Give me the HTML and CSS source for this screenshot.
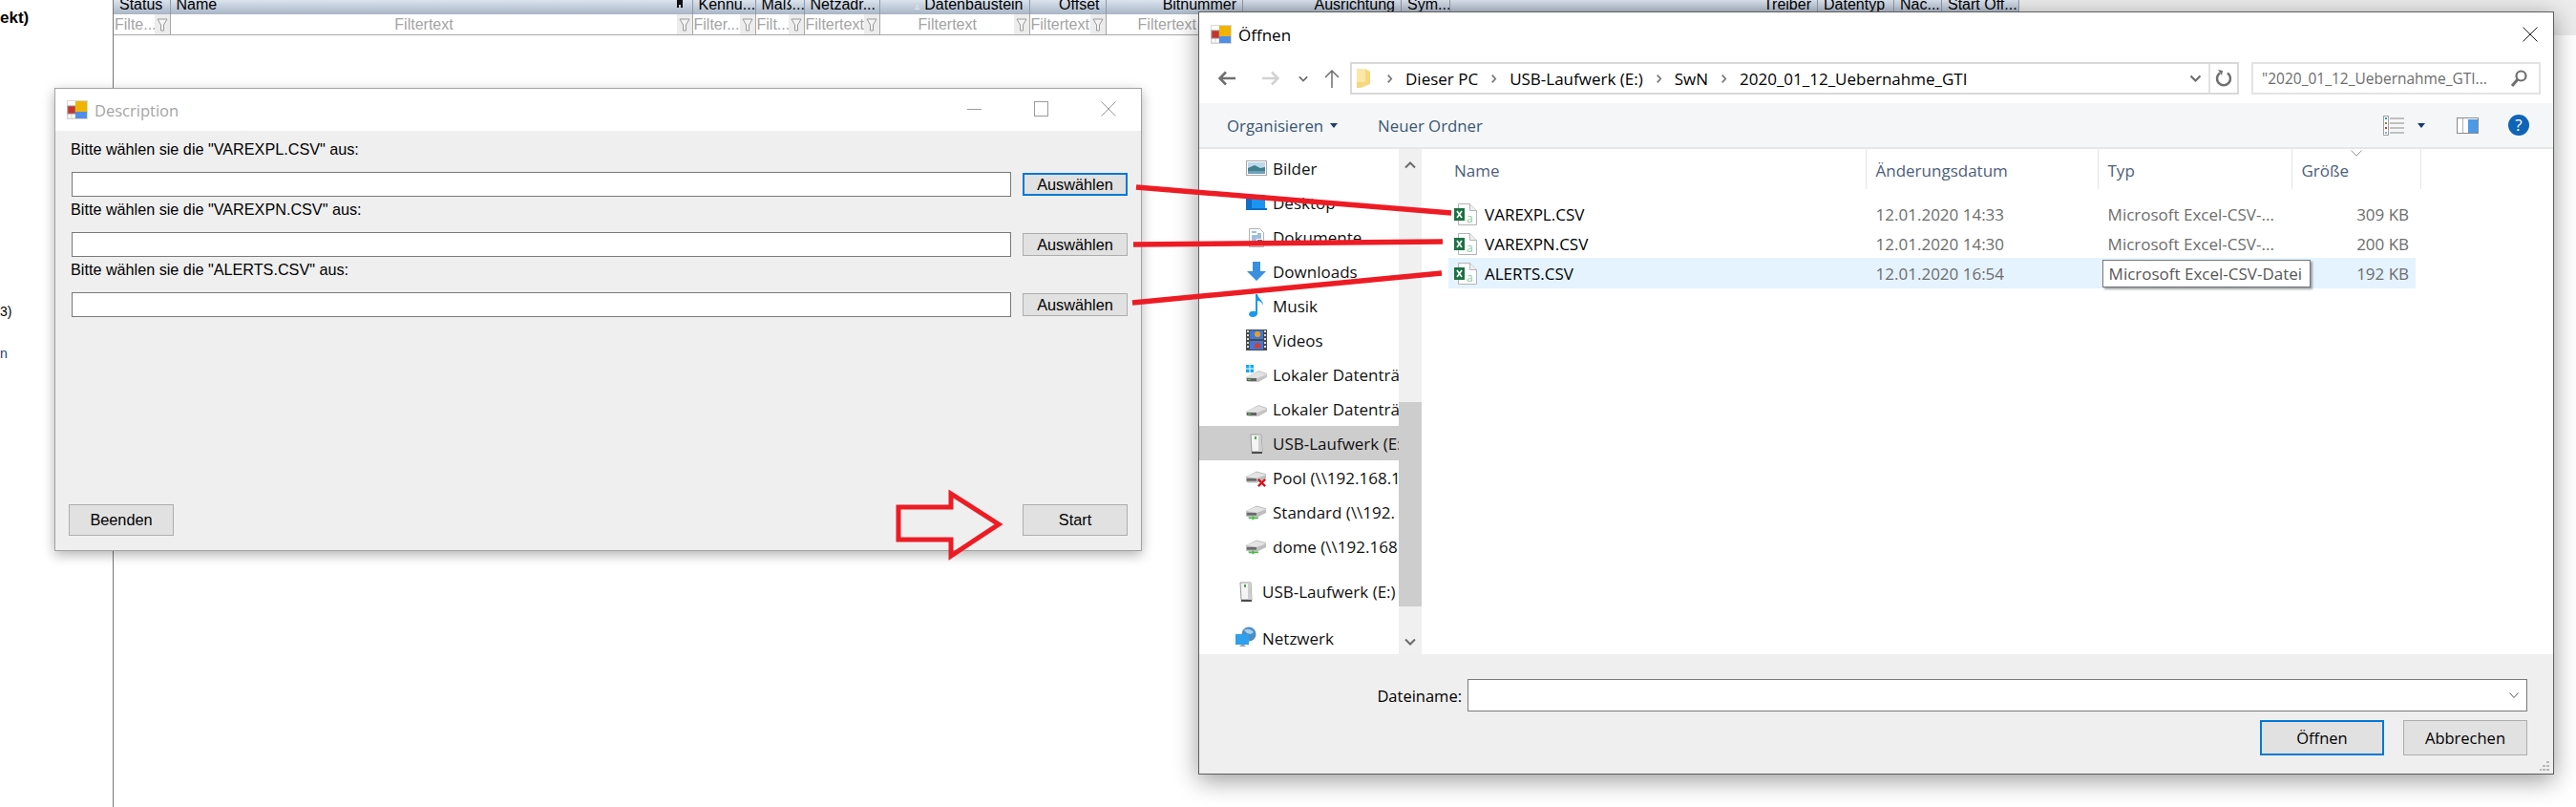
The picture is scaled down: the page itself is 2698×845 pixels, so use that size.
FILE: index.html

```html
<!DOCTYPE html>
<html lang="de">
<head>
  <meta charset="UTF-8">
  <title>Description</title>
  <link rel="stylesheet" href="styles.css">
</head>
<body>
  <svg class="defs" width="0" height="0">
    <defs>
      <symbol id="app" viewBox="0 0 22 20">
        <rect x="0.5" y="0.5" width="21" height="19" fill="#fff" stroke="#d8d8d8"/>
        <path d="M1 14v5h8v-5M5 14v5" fill="none" stroke="#d0d0d0"/>
        <rect x="1" y="6" width="8" height="8" fill="#c8322c" stroke="#9a8a88"/>
        <rect x="9" y="1" width="12" height="11" fill="#f0b400"/>
        <rect x="9" y="12" width="12" height="7" fill="#4f8fe8"/>
      </symbol>
      <symbol id="funnel" viewBox="0 0 12 14">
        <path d="M1 1h10L7.5 7v6h-3V7z" fill="#f4f4f4" stroke="#9a9a9a"/>
      </symbol>
      <symbol id="pic" viewBox="0 0 22 24">
        <rect x="0.5" y="4.5" width="21" height="15" fill="#fff" stroke="#a8a8a8"/>
        <rect x="2" y="6" width="18" height="7" fill="#bcd8ea"/>
        <path d="M2 12l7-3 6 3 5-1v7H2z" fill="#3f7f8e"/>
        <rect x="2" y="15" width="18" height="3" fill="#6f9fb8"/>
      </symbol>
      <symbol id="desk" viewBox="0 0 22 24">
        <path d="M2 4h18v14H2z" fill="#1b95f2"/>
        <path d="M0 4h6v16H0zM2 18h20v2H2z" fill="#0f6fc4"/>
      </symbol>
      <symbol id="doc" viewBox="0 0 22 24">
        <path d="M3.5 3.5h11l4 4v15h-15z" fill="#fff" stroke="#b0b0b0"/>
        <path d="M6 7h5M12 9h4M6 11h10M6 13h10M6 15h5M6 17h5M6 19h10" stroke="#3e7fc2"/>
        <rect x="12" y="15" width="5" height="4" fill="#54707c"/>
      </symbol>
      <symbol id="dl" viewBox="0 0 22 24">
        <path d="M7 2h8v10h6l-10 10L1 12h6z" fill="#3b8fe0"/>
      </symbol>
      <symbol id="note" viewBox="0 0 22 24">
        <path d="M10 0h2c1 5 6 6 6 12-1-3-3-5-6-5v13c0 3-3 4-5 4s-4-1-4-3c0-3 4-4 7-3z" fill="#1a9ae8"/>
      </symbol>
      <symbol id="film" viewBox="0 0 22 24">
        <rect x="0" y="1" width="22" height="22" fill="#4a4a4a"/>
        <path d="M1 3h2M1 7h2M1 11h2M1 15h2M1 19h2M19 3h2M19 7h2M19 11h2M19 15h2M19 19h2" stroke="#ddd" stroke-width="2"/>
        <rect x="4" y="2" width="14" height="9" fill="#3f78d8"/>
        <rect x="4" y="13" width="14" height="9" fill="#3f78d8"/>
        <circle cx="12" cy="6" r="3" fill="#e8a020"/>
        <circle cx="12" cy="18" r="3" fill="#d83c2c"/>
      </symbol>
      <symbol id="drive" viewBox="0 0 22 24">
        <path d="M0 15l13-7 9 3v4l-9 5H4l-4-1z" fill="#c4c4c4"/>
        <path d="M0 15l13-6 9 3-10 4z" fill="#e2e2e2"/>
        <path d="M1 16h10v3H1z" fill="#646464"/>
        <rect x="2" y="17" width="3" height="1" fill="#5ac85a"/>
      </symbol>
      <symbol id="win" viewBox="0 0 22 24">
        <use href="#drive" width="22" height="24"/>
        <path d="M0 2h3.5v3.5H0zM4.500 2H8v3.500H4.500zM0 6.500h3.500V10H0zM4.500 6.500H8V10H4.500z" fill="#14a8f0"/>
      </symbol>
      <symbol id="usb" viewBox="0 0 22 24">
        <path d="M5 3h11l1 18H6z" fill="#f4f4f4" stroke="#9a9a9a"/>
        <path d="M13 3h3l1 18h-4z" fill="#cfcfcf"/>
        <path d="M6 21h11v2H6z" fill="#4c4c4c"/>
        <rect x="9" y="5" width="2" height="3" fill="#4ca84c"/>
      </symbol>
      <symbol id="netdrive" viewBox="0 0 24 24">
        <path d="M0 11l12-6 11 3v5l-10 5H3l-3-1z" fill="#bdbdbd"/>
        <path d="M0 11l12-5 11 3-11 4z" fill="#e4e4e4"/>
        <path d="M1 13h11v3H1z" fill="#6a6a6a"/>
        <path d="M3 19h11M8 17v4" stroke="#50b84c" stroke-width="2"/>
      </symbol>
      <symbol id="lostdrive" viewBox="0 0 24 24">
        <path d="M0 11l12-6 11 3v5l-10 5H3l-3-1z" fill="#bdbdbd"/>
        <path d="M0 11l12-5 11 3-11 4z" fill="#e4e4e4"/>
        <path d="M1 13h11v3H1z" fill="#6a6a6a"/>
        <path d="M14 14l8 8M22 14l-8 8" stroke="#d8141c" stroke-width="2.500"/>
      </symbol>
      <symbol id="globe" viewBox="0 0 22 24">
        <circle cx="14" cy="8" r="7.500" fill="#4a8ec8"/>
        <path d="M9 4c3-2 7-2 10 2l-3 2-4-1z" fill="#a8d0ea"/>
        <rect x="0" y="8" width="14" height="11" fill="#2ea0ee"/>
        <path d="M4 21h7l-2-2H6z" fill="#a0a0a0"/>
      </symbol>
      <symbol id="csv" viewBox="0 0 24 23">
        <path d="M4.500 0.500h12l7 7v15h-19z" fill="#fff" stroke="#b4b4b4"/>
        <path d="M16.500 0.500v7h7" fill="#f0f0f0" stroke="#b4b4b4"/>
        <rect x="0" y="5" width="11" height="13" fill="#1e7145"/>
        <path d="M3 8l5 7M8 8l-5 7" stroke="#fff" stroke-width="1.600"/>
        <text x="13" y="20" class="csv-a">a</text>
      </symbol>
      <symbol id="chev" viewBox="0 0 8 12">
        <path d="M2 1.500l4 4.500-4 4.500" fill="none" stroke="#7a7a7a" stroke-width="2"/>
      </symbol>
      <symbol id="chevd" viewBox="0 0 12 8">
        <path d="M1 1.500l5 5 5-5" fill="none" stroke="#6a6a6a" stroke-width="2"/>
      </symbol>
    </defs>
  </svg>

  <div class="app">
    <aside class="side">
      <b class="side-title">ekt)</b>
      <span class="side-count">3)</span>
      <span class="side-link">n</span>
    </aside>
    <main class="work">
      <div class="grid-band">
        <div class="grid-table">
          <div class="grid-head">
            <div class="th">Status</div>
            <div class="th">Name<svg class="pin" viewBox="0 0 8 8"><path d="M1 0h6v8H5V5H3v3H1z" fill="#111"/></svg></div>
            <div class="th">Kennu...</div>
            <div class="th">Maß...</div>
            <div class="th">Netzadr...</div>
            <div class="th th-r"><span class="sort">▵</span>Datenbaustein</div>
            <div class="th th-r">Offset</div>
            <div class="th th-r">Bitnummer</div>
            <div class="th th-r">Ausrichtung</div>
            <div class="th">Sym...</div>
            <div class="th th-r">Treiber</div>
            <div class="th">Datentyp</div>
            <div class="th">Nac...</div>
            <div class="th">Start Off...</div>
          </div>
          <div class="grid-filter">
            <div class="fc"><span class="ft">Filte...</span><span class="fb"><svg><use href="#funnel"/></svg></span></div>
            <div class="fc"><span class="ft ft-c">Filtertext</span><span class="fb"><svg><use href="#funnel"/></svg></span></div>
            <div class="fc"><span class="ft">Filter...</span><span class="fb"><svg><use href="#funnel"/></svg></span></div>
            <div class="fc"><span class="ft">Filt...</span><span class="fb"><svg><use href="#funnel"/></svg></span></div>
            <div class="fc"><span class="ft">Filtertext</span><span class="fb"><svg><use href="#funnel"/></svg></span></div>
            <div class="fc"><span class="ft ft-c">Filtertext</span><span class="fb"><svg><use href="#funnel"/></svg></span></div>
            <div class="fc"><span class="ft">Filtertext</span><span class="fb"><svg><use href="#funnel"/></svg></span></div>
            <div class="fc"><span class="ft ft-c">Filtertext</span><span class="fb"><svg><use href="#funnel"/></svg></span></div>
          </div>
        </div>
      </div>
    </main>
  </div>

  <section class="win win-desc">
    <header class="desc-title">
      <svg class="app-ico"><use href="#app"/></svg>
      <span class="desc-name">Description</span>
      <div class="caption">
        <svg class="cap" viewBox="0 0 16 16"><path d="M0 8.500h15" stroke="#9a9a9a" fill="none"/></svg>
        <svg class="cap" viewBox="0 0 16 16"><rect x="0.500" y="0.500" width="14" height="15" stroke="#9a9a9a" fill="none"/></svg>
        <svg class="cap" viewBox="0 0 16 16"><path d="M0.500 0.500l15 15M15.500 0.500l-15 15" stroke="#9a9a9a" fill="none"/></svg>
      </div>
    </header>
    <div class="desc-body">
      <div class="pick">
        <label class="pick-label">Bitte wählen sie die "VAREXPL.CSV" aus:</label>
        <div class="pick-row"><input class="pick-input" type="text"><button class="btn btn-focus">Auswählen</button></div>
      </div>
      <div class="pick">
        <label class="pick-label">Bitte wählen sie die "VAREXPN.CSV" aus:</label>
        <div class="pick-row"><input class="pick-input" type="text"><button class="btn">Auswählen</button></div>
      </div>
      <div class="pick">
        <label class="pick-label">Bitte wählen sie die "ALERTS.CSV" aus:</label>
        <div class="pick-row"><input class="pick-input" type="text"><button class="btn">Auswählen</button></div>
      </div>
      <div class="desc-foot">
        <button class="btn btn-big">Beenden</button>
        <button class="btn btn-big">Start</button>
      </div>
    </div>
  </section>

  <section class="win win-open">
    <header class="open-title">
      <svg class="app-ico"><use href="#app"/></svg>
      <span class="open-name">Öffnen</span>
      <svg class="open-close" viewBox="0 0 16 16"><path d="M0.500 0.500l15 15M15.500 0.500l-15 15" stroke="#222" fill="none"/></svg>
    </header>

    <div class="open-nav">
      <svg class="nav-back" viewBox="0 0 20 16"><path d="M19 8H3M9 1.500L2.500 8 9 14.500" fill="none" stroke="#6f6f6f" stroke-width="2.500"/></svg>
      <svg class="nav-fwd" viewBox="0 0 20 16"><path d="M1 8h16M11 1.500L17.500 8 11 14.500" fill="none" stroke="#d2d2d2" stroke-width="2.500"/></svg>
      <svg class="nav-down"><use href="#chevd"/></svg>
      <svg class="nav-up" viewBox="0 0 18 20"><path d="M9 20V2M2 9l7-7 7 7" fill="none" stroke="#6f6f6f" stroke-width="1.500"/></svg>
      <div class="addr">
        <svg class="folder" viewBox="0 0 14 20"><path d="M0 0h9l5 3v13l-10 4H0z" fill="#f6d77e"/><path d="M0 0h9v14H0z" fill="#fbe7a6"/></svg>
        <svg class="crumb-sep"><use href="#chev"/></svg>
        <span>Dieser PC</span>
        <svg class="crumb-sep"><use href="#chev"/></svg>
        <span>USB-Laufwerk (E:)</span>
        <svg class="crumb-sep"><use href="#chev"/></svg>
        <span>SwN</span>
        <svg class="crumb-sep"><use href="#chev"/></svg>
        <span>2020_01_12_Uebernahme_GTI</span>
        <svg class="addr-down"><use href="#chevd"/></svg>
        <span class="addr-refresh">
          <svg viewBox="0 0 18 18"><path d="M5 3.500a7 7 0 1 0 8 0" fill="none" stroke="#6f6f6f" stroke-width="2.500"/><path d="M3 0l5 1-1 5z" fill="#6f6f6f"/></svg>
        </span>
      </div>
      <div class="search">
        <span class="search-text">"2020_01_12_Uebernahme_GTI...</span>
        <svg class="search-ico" viewBox="0 0 18 18"><circle cx="11.500" cy="6.500" r="5" fill="none" stroke="#6f6f6f" stroke-width="2.200"/><path d="M8 10l-6 7" stroke="#6f6f6f" stroke-width="3"/></svg>
      </div>
    </div>

    <div class="open-tools">
      <span class="tool">Organisieren</span>
      <span class="tool-tri"></span>
      <span class="tool tool-new">Neuer Ordner</span>
      <div class="tool-right">
        <svg class="view-ico" viewBox="0 0 22 21">
          <rect x="0.500" y="0.500" width="5" height="20" fill="#fff" stroke="#a0a0a0"/>
          <path d="M7 3h15M7 8h15M7 13h15M7 18h15" stroke="#8a8a8a"/>
          <rect x="2" y="2" width="2" height="2" fill="#3b8fc8"/><rect x="2" y="7" width="2" height="2" fill="#9a8a3c"/><rect x="2" y="12" width="2" height="2" fill="#c8322c"/><rect x="2" y="17" width="2" height="2" fill="#8ab0c8"/>
        </svg>
        <span class="view-tri"></span>
        <svg class="pane-ico" viewBox="0 0 23 17">
          <rect x="0.500" y="0.500" width="22" height="16" fill="#fff" stroke="#8a8a8a"/>
          <path d="M6.500 1v15" stroke="#b0b0b0"/>
          <rect x="12" y="2" width="10" height="14" fill="#4a9ae8"/>
        </svg>
        <span class="help">?</span>
      </div>
    </div>

    <div class="open-main">
      <nav class="tree">
        <div class="tree-row"><svg class="ico"><use href="#pic"/></svg><span>Bilder</span></div>
        <div class="tree-row"><svg class="ico"><use href="#desk"/></svg><span>Desktop</span></div>
        <div class="tree-row"><svg class="ico"><use href="#doc"/></svg><span>Dokumente</span></div>
        <div class="tree-row"><svg class="ico"><use href="#dl"/></svg><span>Downloads</span></div>
        <div class="tree-row"><svg class="ico"><use href="#note"/></svg><span>Musik</span></div>
        <div class="tree-row"><svg class="ico"><use href="#film"/></svg><span>Videos</span></div>
        <div class="tree-row"><svg class="ico"><use href="#win"/></svg><span>Lokaler Datenträger</span></div>
        <div class="tree-row"><svg class="ico"><use href="#drive"/></svg><span>Lokaler Datenträger</span></div>
        <div class="tree-row tree-sel"><svg class="ico"><use href="#usb"/></svg><span>USB-Laufwerk (E:)</span></div>
        <div class="tree-row"><svg class="ico"><use href="#lostdrive"/></svg><span>Pool (\\192.168.1</span></div>
        <div class="tree-row"><svg class="ico"><use href="#netdrive"/></svg><span>Standard (\\192.</span></div>
        <div class="tree-row"><svg class="ico"><use href="#netdrive"/></svg><span>dome (\\192.168</span></div>
        <div class="tree-row tree-top tree-usb"><svg class="ico"><use href="#usb"/></svg><span>USB-Laufwerk (E:)</span></div>
        <div class="tree-row tree-top tree-net"><svg class="ico"><use href="#globe"/></svg><span>Netzwerk</span></div>
      </nav>
      <div class="vscroll">
        <svg class="vs-up" viewBox="0 0 12 8"><path d="M1 6.500l5-5 5 5" fill="none" stroke="#6a6a6a" stroke-width="2"/></svg>
        <div class="vs-thumb"></div>
        <svg class="vs-down"><use href="#chevd"/></svg>
      </div>
      <div class="files">
        <div class="files-head">
          <div class="col col-name">Name</div>
          <div class="col">Änderungsdatum</div>
          <div class="col">Typ</div>
          <div class="col">Größe<svg class="col-caret" viewBox="0 0 12 7"><path d="M0.500 0.500L6 6l5.500-5.500" fill="none" stroke="#9a9a9a"/></svg></div>
        </div>
        <div class="file">
          <div class="f-name"><svg class="f-ico"><use href="#csv"/></svg>VAREXPL.CSV</div>
          <div class="f-meta">12.01.2020 14:33</div>
          <div class="f-meta">Microsoft Excel-CSV-...</div>
          <div class="f-meta f-size">309 KB</div>
        </div>
        <div class="file">
          <div class="f-name"><svg class="f-ico"><use href="#csv"/></svg>VAREXPN.CSV</div>
          <div class="f-meta">12.01.2020 14:30</div>
          <div class="f-meta">Microsoft Excel-CSV-...</div>
          <div class="f-meta f-size">200 KB</div>
        </div>
        <div class="file file-hover">
          <div class="f-name"><svg class="f-ico"><use href="#csv"/></svg>ALERTS.CSV</div>
          <div class="f-meta">12.01.2020 16:54</div>
          <div class="f-meta f-type"><span class="tip">Microsoft Excel-CSV-Datei</span></div>
          <div class="f-meta f-size">192 KB</div>
        </div>
      </div>
    </div>

    <footer class="open-foot">
      <div class="fname">
        <span class="fname-label">Dateiname:</span>
        <div class="fname-box"><svg class="fname-down" viewBox="0 0 10 6"><path d="M0.500 0.500L5 5.500l4.500-5" fill="none" stroke="#555"/></svg></div>
      </div>
      <div class="open-btns">
        <button class="btn btn-open btn-focus">Öffnen</button>
        <button class="btn btn-open">Abbrechen</button>
      </div>
      <svg class="grip" viewBox="0 0 10 10"><path d="M7 0h3v2H7zM7 4h3v2H7zM7 8h3v2H7zM3 4h3v2H3zM3 8h3v2H3zM0 8h2v2H0z" fill="#b8b8b8"/></svg>
    </footer>
  </section>

  <!-- rote Markierungen ueber beiden Fenstern -->
  <svg class="marks" viewBox="0 0 2698 845">
    <path d="M1190 196L1520 223M1187 256L1511 253M1186 317L1510 286" stroke="#ed1c24" stroke-width="5.500" fill="none"/>
    <polygon points="941,531 996,531 996,517 1046,549 996,582 996,565 941,565" stroke="#ed1c24" stroke-width="5" fill="none"/>
  </svg>
</body>
</html>
```

FILE: styles.css

```css
html, body {
  margin: 0;
  height: 845px;
  overflow: hidden;
  background: #fff;
}
body {
  position: relative;
  font-family: "Liberation Sans", Arial, sans-serif;
  font-size: 16px;
  color: #000;
}
svg {
  display: block;
  flex: none;
}
.defs {
  position: absolute;
}
.csv-a {
  font-family: "Open Sans", sans-serif;
  font-size: 12px;
  fill: #8cc8a4;
}

/* Hintergrund */
.app {
  display: flex;
  height: 845px;
}
.side {
  width: 118px;
  flex: none;
  border-right: 1px solid #777;
  display: flex;
  flex-direction: column;
  font-size: 14px;
  padding-top: 10px;
}
.side-title {
  font-size: 17px;
  line-height: 17px;
}
.side-count {
  margin-top: 291px;
  line-height: 17px;
}
.side-link {
  margin-top: 27px;
  line-height: 17px;
  color: #1a3c78;
}
.work {
  flex: 1;
  min-width: 0;
}
.grid-band {
  height: 37px;
  background: #ececec;
}
.grid-table {
  width: 1996px;
}
.grid-head, .grid-filter {
  display: grid;
  grid-template-columns: 59.5px 547px 66px 51px 79.5px 156.5px 80px 143.5px 166px 51px 385px 80px 50px 81px;
}
.grid-head {
  height: 15px;
  background: linear-gradient(#dbe3ee, #a9b5c6);
}
.th {
  position: relative;
  height: 15px;
  line-height: 10px;
  padding: 0 6px;
  box-sizing: border-box;
  border-right: 1px solid #8f9aa9;
  white-space: nowrap;
  overflow: hidden;
}
.th-r {
  text-align: right;
}
.pin {
  position: absolute;
  right: 9px;
  top: 0;
  width: 8px;
  height: 8px;
}
.sort {
  color: #eef2f7;
  font-size: 10px;
  margin-right: 5px;
}
.grid-filter {
  height: 22px;
  background: #fff;
  border-bottom: 1px solid #a8a8a8;
  box-sizing: border-box;
}
.fc {
  display: flex;
  border-right: 1px solid #a8a8a8;
  min-width: 0;
}
.ft {
  flex: 1;
  min-width: 0;
  line-height: 21px;
  color: #a4a4a4;
  white-space: nowrap;
  overflow: hidden;
  padding-left: 1px;
}
.ft-c {
  text-align: center;
}
.fb {
  width: 16px;
  flex: none;
  background: #ececec;
  display: flex;
  align-items: center;
  justify-content: center;
}
.fb svg {
  width: 12px;
  height: 14px;
}

/* Fenster */
.win {
  position: absolute;
  box-sizing: border-box;
  display: flex;
  flex-direction: column;
  background: #fff;
}
.app-ico {
  width: 22px;
  height: 20px;
}

/* Description */
.win-desc {
  left: 57px;
  top: 92px;
  width: 1139px;
  height: 485px;
  border: 1px solid #a2a2a2;
  box-shadow: 0 4px 12px rgba(0,0,0,0.3);
}
.desc-title {
  height: 44px;
  flex: none;
  display: flex;
  align-items: center;
  padding-left: 12px;
}
.desc-name {
  margin-left: 7px;
  font-family: "Open Sans", sans-serif;
  font-size: 16.500px;
  color: #a4a4a4;
}
.caption {
  margin-left: auto;
  display: flex;
  gap: 54px;
  padding-right: 26px;
  margin-top: -2px;
}
.cap {
  width: 16px;
  height: 16px;
}
.desc-body {
  flex: 1;
  background: #efefef;
  display: flex;
  flex-direction: column;
  padding: 9px 14px 15px 14px;
}
.pick {
  margin-bottom: 3px;
}
.pick-label {
  display: block;
  padding-left: 2px;
  line-height: 20px;
  margin-bottom: 14px;
  font-size: 16.200px;
  white-space: nowrap;
}
.pick-row {
  display: flex;
  align-items: center;
  gap: 12px;
  padding-left: 3px;
}
.pick-input {
  width: 984px;
  height: 26px;
  box-sizing: border-box;
  border: 1px solid #7a7a7a;
  background: #fff;
  padding: 0;
  margin: 0;
}
.btn {
  width: 110px;
  height: 24px;
  box-sizing: border-box;
  border: 1px solid #adadad;
  background: #e1e1e1;
  font-family: "Liberation Sans", Arial, sans-serif;
  font-size: 16.300px;
  color: #000;
  padding: 0;
  margin: 0;
}
.btn-focus {
  border: 2px solid #0078d7;
}
.btn-big {
  height: 33px;
}
.desc-foot {
  margin-top: auto;
  display: flex;
  justify-content: space-between;
}

/* Oeffnen-Dialog */
.win-open {
  left: 1255px;
  top: 12px;
  width: 1420px;
  height: 799px;
  border: 1px solid #5e5e5e;
  box-shadow: 0 6px 24px rgba(0,0,0,0.4);
  font-family: "Open Sans", sans-serif;
  font-size: 17px;
}
.open-title {
  height: 52px;
  flex: none;
  display: flex;
  align-items: center;
  padding: 0 16px 6px 12px;
  box-sizing: border-box;
}
.open-name {
  margin-left: 7px;
}
.open-close {
  margin-left: auto;
  width: 16px;
  height: 16px;
}
.open-nav {
  height: 34px;
  flex: none;
  margin-bottom: 9px;
  display: flex;
  align-items: center;
  padding-left: 19px;
}
.nav-back, .nav-fwd {
  width: 20px;
  height: 16px;
}
.nav-fwd {
  margin-left: 26px;
}
.nav-down {
  width: 10px;
  height: 7px;
  margin-left: 19px;
}
.nav-up {
  width: 18px;
  height: 20px;
  margin-left: 16px;
}
.addr {
  margin-left: 10px;
  width: 931px;
  height: 34px;
  box-sizing: border-box;
  border: 2px solid #d9d9d9;
  display: flex;
  align-items: center;
  gap: 13px;
  padding-left: 5px;
  white-space: nowrap;
}
.folder {
  width: 14px;
  height: 20px;
  margin-right: 4px;
}
.crumb-sep {
  width: 7px;
  height: 11px;
}
.addr-down {
  width: 13px;
  height: 8px;
  margin-left: auto;
}
.addr-refresh {
  align-self: stretch;
  width: 28px;
  margin-left: -6px;
  border-left: 2px solid #e3e3e3;
  display: flex;
  align-items: center;
  justify-content: center;
}
.addr-refresh svg {
  width: 18px;
  height: 18px;
}
.search {
  margin-left: 13px;
  width: 303px;
  height: 34px;
  box-sizing: border-box;
  border: 2px solid #e3e3e3;
  display: flex;
  align-items: center;
  padding: 0 12px 0 9px;
  color: #6d6d6d;
  font-size: 15.500px;
  white-space: nowrap;
}
.search-text {
  flex: 1;
  overflow: hidden;
}
.search-ico {
  width: 18px;
  height: 18px;
}
.open-tools {
  height: 48px;
  flex: none;
  box-sizing: border-box;
  background: #f5f6f7;
  border-bottom: 2px solid #e6e6e6;
  display: flex;
  align-items: center;
  padding: 0 25px 0 29px;
}
.tool {
  color: #3a5676;
  font-size: 16.800px;
}
.tool-tri, .view-tri {
  width: 0;
  height: 0;
  border: 4px solid transparent;
  border-top: 5px solid #1f3f66;
  border-bottom: 0;
}
.tool-tri {
  margin-left: 7px;
}
.tool-new {
  margin-left: 42px;
}
.tool-right {
  margin-left: auto;
  display: flex;
  align-items: center;
}
.view-ico {
  width: 22px;
  height: 21px;
}
.view-tri {
  margin-left: 14px;
  border-top-color: #123a6c;
}
.pane-ico {
  width: 23px;
  height: 17px;
  margin-left: 33px;
}
.help {
  width: 22px;
  height: 22px;
  margin-left: 31px;
  border-radius: 50%;
  background: #0f64b8;
  color: #fff;
  font-size: 17px;
  line-height: 22px;
  text-align: center;
}
.open-main {
  flex: 1;
  min-height: 0;
  display: flex;
}
.tree {
  width: 209px;
  flex: none;
  padding-top: 2px;
  box-sizing: border-box;
  overflow: hidden;
}
.tree-row {
  height: 36px;
  display: flex;
  align-items: center;
  gap: 6px;
  padding-left: 49px;
  white-space: nowrap;
  overflow: hidden;
}
.tree-row span {
  color: #111;
}
.tree-sel {
  background: #cdcdcd;
}
.tree-top {
  padding-left: 38px;
}
.tree-usb {
  margin-top: 11px;
}
.tree-net {
  margin-top: 13px;
}
.ico {
  width: 22px;
  height: 24px;
}
.vscroll {
  width: 24px;
  flex: none;
  background: #f0f0f0;
  display: flex;
  flex-direction: column;
  align-items: center;
}
.vs-up {
  width: 12px;
  height: 8px;
  margin-top: 13px;
}
.vs-thumb {
  align-self: stretch;
  height: 214px;
  margin-top: 244px;
  background: #cdcdcd;
}
.vs-down {
  width: 12px;
  height: 8px;
  margin-top: auto;
  margin-bottom: 9px;
}
.files {
  flex: 1;
  min-width: 0;
  border-left: 4px solid #fff;
}
.files-head {
  height: 42px;
  display: grid;
  grid-template-columns: 461.500px 243px 203px 135px;
}
.col {
  position: relative;
  box-sizing: border-box;
  padding: 3px 0 0 10px;
  display: flex;
  align-items: center;
  border-right: 1px solid #e5e5e5;
  color: #4c607a;
}
.col-name {
  padding-left: 30px;
}
.col-caret {
  position: absolute;
  left: 61px;
  top: 1px;
  width: 12px;
  height: 7px;
}
.file {
  margin: 0 0 0 24px;
  width: 1013px;
  height: 31px;
  display: grid;
  grid-template-columns: 447.600px 243px 202.500px 120px;
  align-items: center;
}
.files-head + .file {
  margin-top: 10.500px;
}
.file-hover {
  background: #e5f3ff;
  box-shadow: 0 -1px 0 #e5f3ff;
}
.f-name {
  display: flex;
  align-items: center;
  gap: 8px;
  padding-left: 6px;
}
.f-ico {
  width: 24px;
  height: 23px;
}
.f-meta {
  color: #6d6d6d;
  white-space: nowrap;
}
.f-size {
  text-align: right;
  padding-right: 7px;
}
.f-type {
  position: relative;
  height: 100%;
}
.tip {
  position: absolute;
  left: -6px;
  top: 1px;
  width: 218px;
  height: 29px;
  line-height: 27px;
  box-sizing: border-box;
  padding-left: 6px;
  border: 1px solid #767676;
  background: #fff;
  color: #575757;
  box-shadow: 2px 2px 2px rgba(0,0,0,0.35);
}
.open-foot {
  position: relative;
  height: 125px;
  flex: none;
  box-sizing: border-box;
  background: #efefef;
  padding: 26px 27px 0 0;
}
.fname {
  display: flex;
  justify-content: flex-end;
  align-items: center;
  gap: 6px;
}
.fname-label {
  font-size: 16.500px;
}
.fname-box {
  width: 1110px;
  height: 34px;
  box-sizing: border-box;
  border: 1px solid #7a7a7a;
  background: #fff;
  display: flex;
  align-items: center;
  justify-content: flex-end;
  padding-right: 8px;
}
.fname-down {
  width: 10px;
  height: 6px;
}
.open-btns {
  display: flex;
  justify-content: flex-end;
  gap: 20px;
  margin-top: 9px;
}
.btn-open {
  width: 130px;
  height: 37px;
  font-family: "Open Sans", sans-serif;
  font-size: 16.500px;
}
.grip {
  position: absolute;
  right: 4px;
  bottom: 3px;
  width: 10px;
  height: 10px;
}

/* rote Linien und Pfeil */
.marks {
  position: absolute;
  left: 0;
  top: 0;
  width: 2698px;
  height: 845px;
  pointer-events: none;
}
```
